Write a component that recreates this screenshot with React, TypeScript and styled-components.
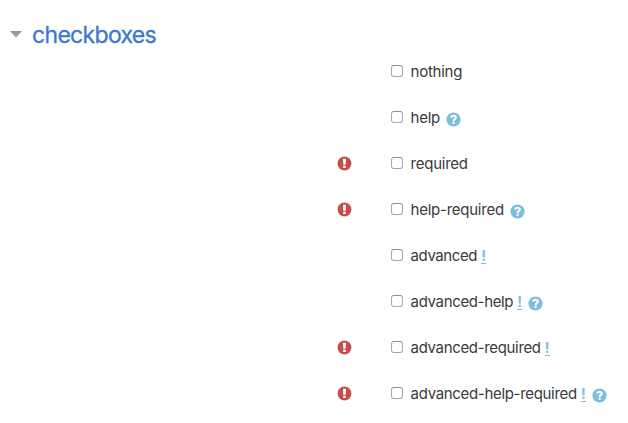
import React from "react";
import styled, { createGlobalStyle } from "styled-components";

const GlobalStyle = createGlobalStyle`
  * { box-sizing: border-box; }
  body {
    margin: 0;
    background: #fff;
    color: #373a3c;
    font-family: Inter, "Liberation Sans", sans-serif;
    font-size: 15px;
  }
`;

const Page = styled.main`
  width: 628px;
  height: 423px;
  overflow: hidden;
`;

const Header = styled.header`
  display: flex;
  align-items: center;
  height: 49px;
  padding: 20px 0 0 10px;
`;

const Caret = styled.svg`
  width: 12px;
  height: 7px;
  margin: 0 10px 1px 0;
  fill: #999;
`;

const Title = styled.h3`
  margin: 0;
  color: #3e76d0;
  font-size: 23px;
  font-weight: 400;
  line-height: 28px;
  letter-spacing: -0.68px;
  -webkit-text-stroke: 0.3px #3e76d0;
`;

const Row = styled.div`
  display: flex;
  height: 46px;
  align-items: center;
`;

const Gutter = styled.div`
  display: flex;
  width: 391px;
  padding-left: 337px;
`;

const Field = styled.label`
  display: flex;
  align-items: center;
`;

const Checkbox = styled.input`
  appearance: none;
  width: 12px;
  height: 12px;
  margin: 0 7.6px 2px 0;
  background: #fff;
  border: 1px solid #a8a8a8;
  border-top-color: #929292;
  border-radius: 3px;
`;

const LabelText = styled.span<{ $tracking: number }>`
  line-height: 22px;
  white-space: nowrap;
  letter-spacing: ${(p) => p.$tracking}px;
`;

const Advanced = styled.span`
  display: flex;
  justify-content: center;
  width: 5px;
  height: 15px;
  margin: 1px 0 0 4px;
  border-bottom: 1px solid #7cbcdc;
  color: #7cbcdc;
  font-size: 14px;
  font-weight: 700;
  line-height: 14px;
`;

const Icon = styled.svg<{ $help?: boolean }>`
  flex: none;
  width: 15px;
  height: 15px;
  margin: ${(p) => (p.$help ? "3px 0 0 6px" : "0 0 2px")};
`;

const RequiredIcon = () => (
  <Icon viewBox="0 0 15 15" role="img" aria-label="Required">
    <circle cx="7.5" cy="7.5" r="6.9" fill="#c34f4c" />
    <path d="M6 2.8h3l-.3 6h-2.4z" fill="#fff" />
    <rect x="6.2" y="9.7" width="2.6" height="2.3" rx=".3" fill="#fff" />
  </Icon>
);

const HelpIcon = () => (
  <Icon $help viewBox="0 0 15 15" role="img" aria-label="Help">
    <circle cx="7.5" cy="7.5" r="7.1" fill="#7cbcdc" />
    <path
      d="M5.1 5.7C5.3 4.4 6.2 3.8 7.5 3.8c1.4 0 2.3.7 2.3 1.8 0 1.5-2.2 1.5-2.2 3.3"
      fill="none"
      stroke="#fff"
      strokeWidth="2.1"
    />
    <rect x="6.5" y="9.8" width="2.2" height="2" fill="#fff" />
  </Icon>
);

interface Option {
  name: string;
  tracking: number;
  required?: boolean;
  advanced?: boolean;
  help?: boolean;
}

const options: Option[] = [
  { name: "nothing", tracking: -0.25 },
  { name: "help", tracking: -0.25, help: true },
  { name: "required", tracking: -0.25, required: true },
  { name: "help-required", tracking: -0.25, required: true, help: true },
  { name: "advanced", tracking: -0.42, advanced: true },
  { name: "advanced-help", tracking: -0.35, advanced: true, help: true },
  { name: "advanced-required", tracking: -0.34, required: true, advanced: true },
  { name: "advanced-help-required", tracking: -0.32, required: true, advanced: true, help: true },
];

export default function App() {
  return (
    <>
      <GlobalStyle />
      <Page>
        <Header>
          <Caret viewBox="0 0 12 7" aria-hidden="true">
            <path d="M0 0h12L6 6.5z" />
          </Caret>
          <Title>checkboxes</Title>
        </Header>
        {options.map((o) => (
          <Row key={o.name}>
            <Gutter>{o.required && <RequiredIcon />}</Gutter>
            <Field>
              <Checkbox type="checkbox" />
              <LabelText $tracking={o.tracking}>{o.name}</LabelText>
              {o.advanced && <Advanced>!</Advanced>}
              {o.help && <HelpIcon />}
            </Field>
          </Row>
        ))}
      </Page>
    </>
  );
}
